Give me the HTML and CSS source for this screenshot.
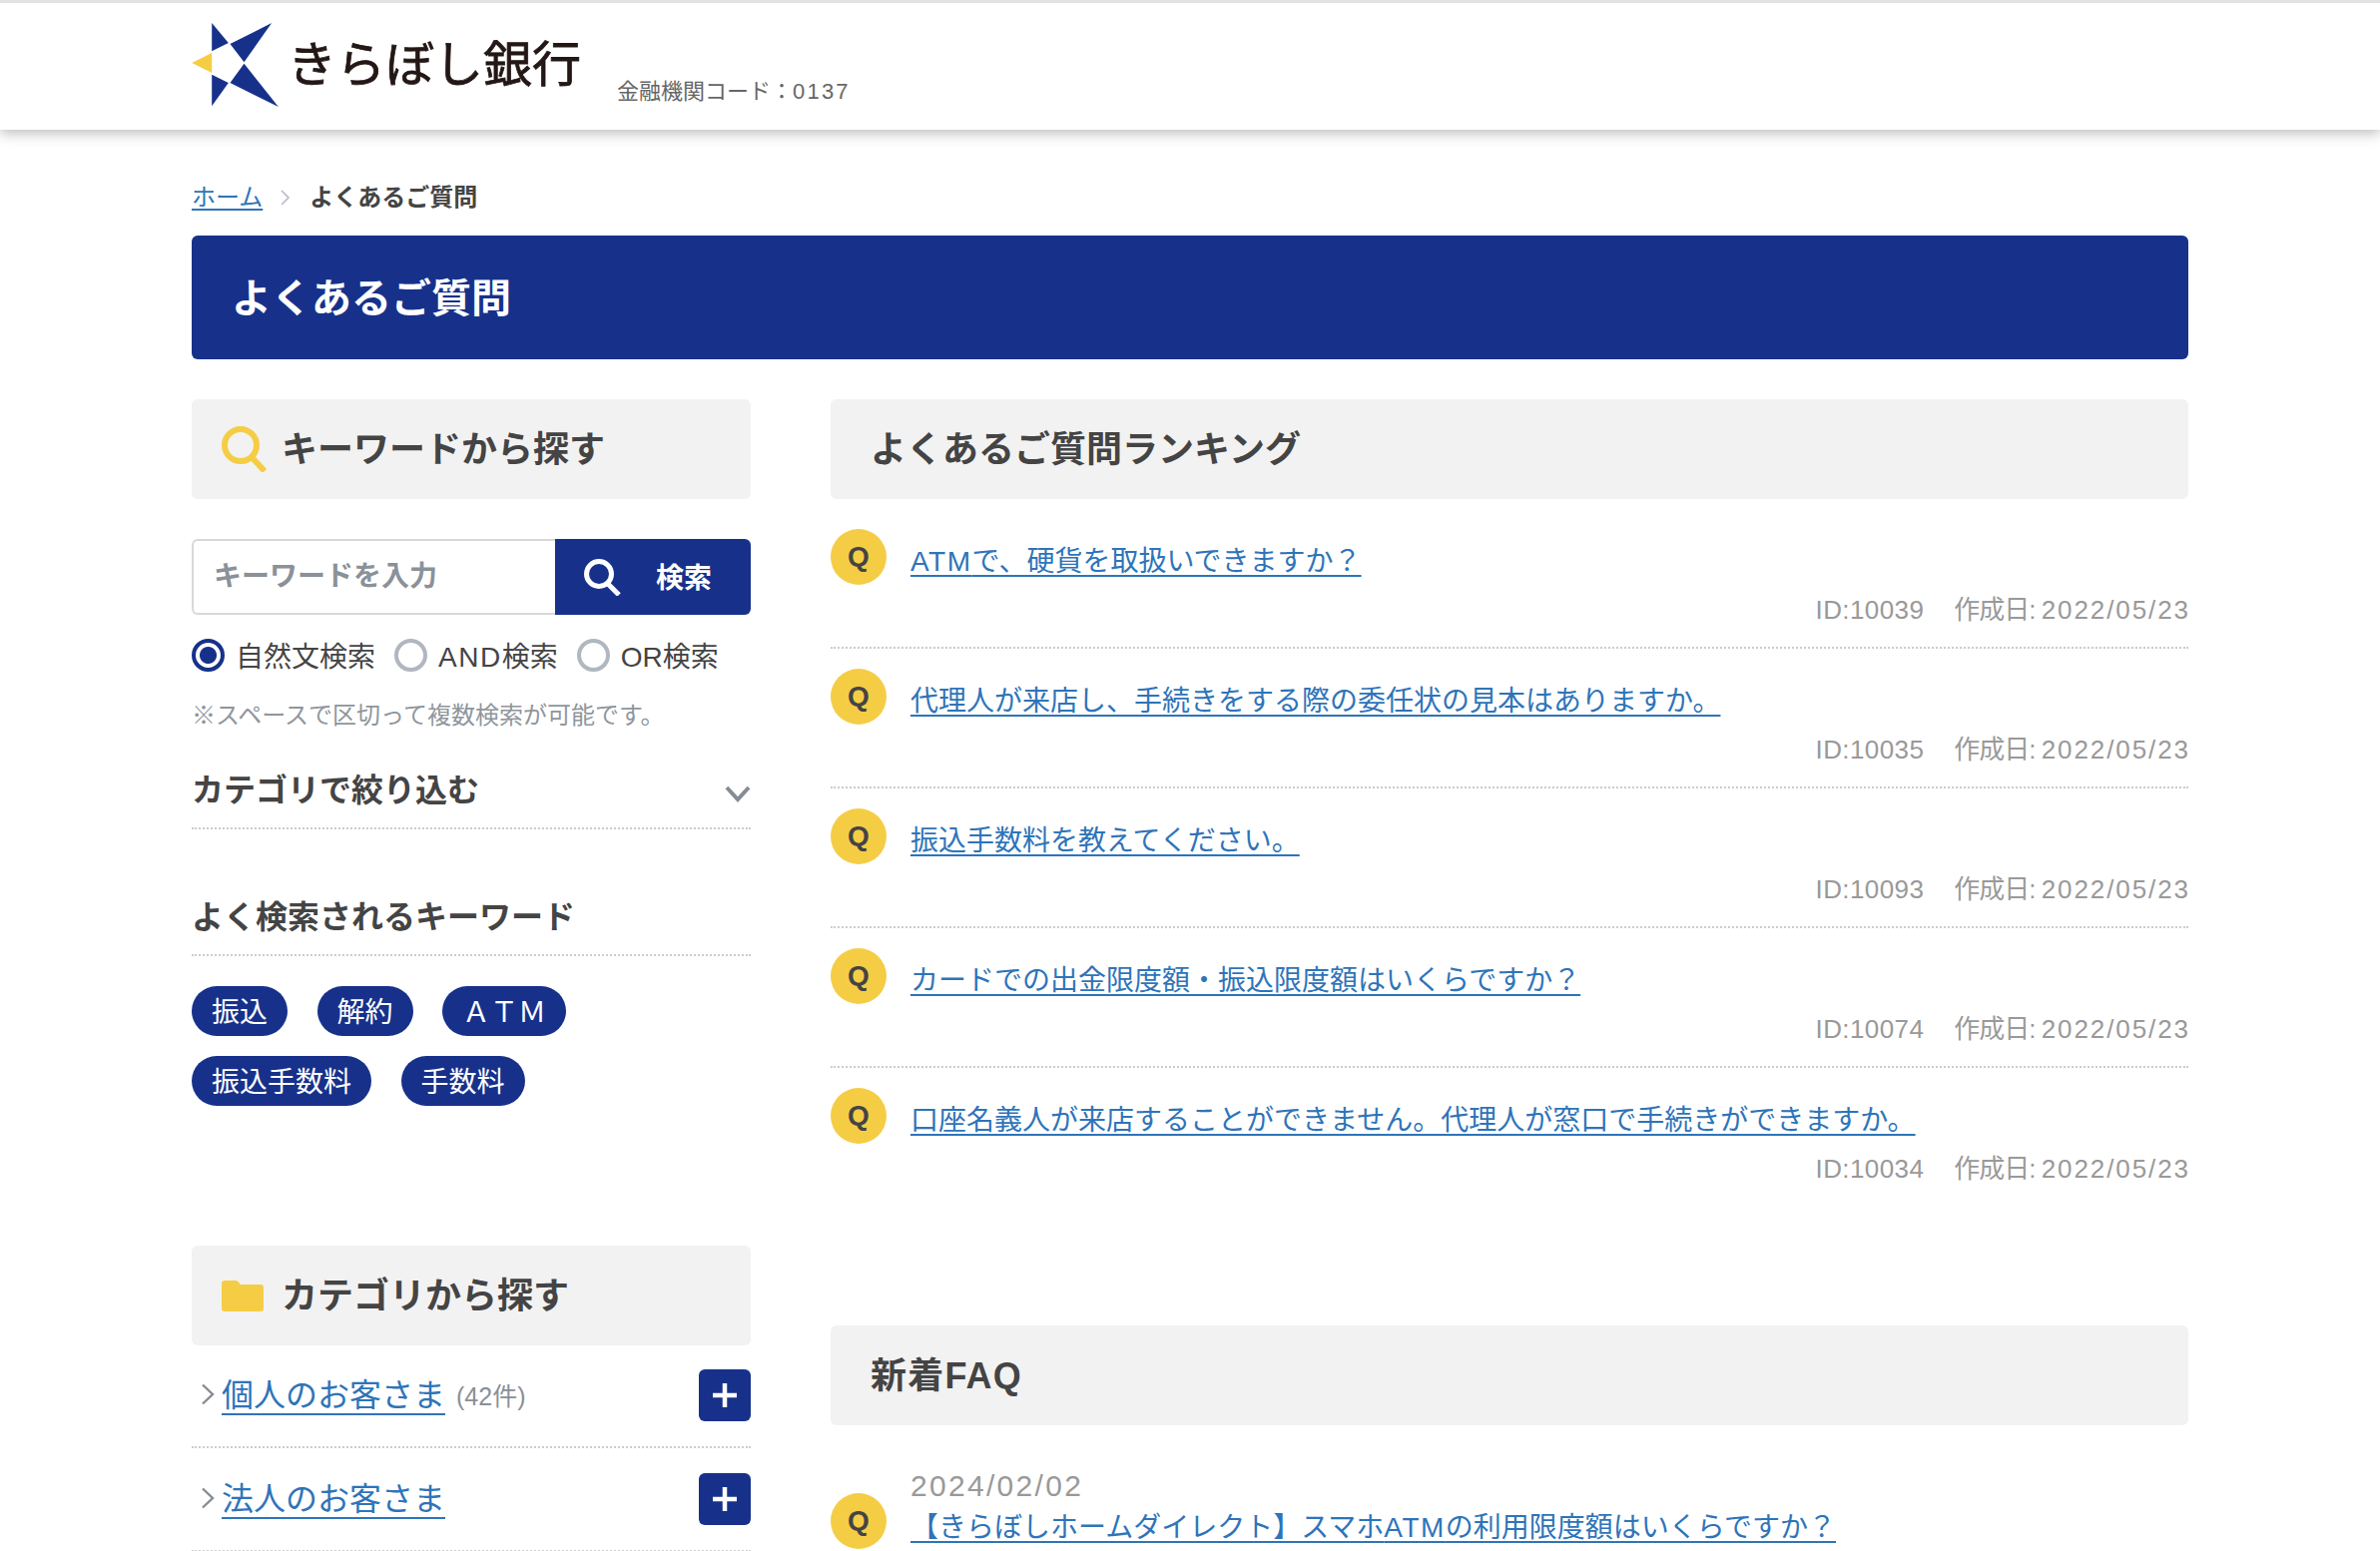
FILE: index.html
```html
<!DOCTYPE html>
<html lang="ja">
<head>
    <meta charset="utf-8">
    <title>よくあるご質問 | きらぼし銀行</title>
    <link rel="stylesheet" href="styles.css">
</head>
<body>
    <header class="site-header">
        <div class="header-inner">
            <a class="logo" href="#">
                <svg class="logo-mark" viewBox="40 40 260 252">
                    <polygon fill="#17318b" points="100,40 150,100 100,125"/>
                    <polygon fill="#17318b" points="280,40 155,103 197,158"/>
                    <polygon fill="#17318b" points="197,162 155,220 300,292"/>
                    <polygon fill="#17318b" points="100,195 150,220 100,290"/>
                    <polygon fill="#f5cd45" points="40,160 100,130 100,190"/>
                </svg>
                <span class="logo-text">きらぼし銀行</span>
            </a>
            <span class="bank-code">金融機関コード：<span class="bank-num">0137</span></span>
        </div>
    </header>

    <main class="container">
        <nav class="breadcrumb">
            <a href="#">ホーム</a>
            <svg class="crumb-sep" viewBox="0 0 10 16"><path d="M1 1l7 7-7 7" fill="none" stroke="#b5bcc4" stroke-width="1.6"/></svg>
            <strong>よくあるご質問</strong>
        </nav>
        <h1 class="page-title">よくあるご質問</h1>

        <div class="columns">
            <div class="side">
                <h2 class="section-head with-icon">
                    <svg class="head-icon" viewBox="0 0 46 46"><circle cx="19" cy="19" r="16" fill="none" stroke="#f5cd45" stroke-width="6"/><path d="M30 31l13 14" stroke="#f5cd45" stroke-width="6" fill="none"/></svg>
                    キーワードから探す
                </h2>

                <form class="search-form">
                    <input class="search-input" type="text" placeholder="キーワードを入力">
                    <button class="search-btn" type="button">
                        <svg class="search-btn-icon" viewBox="0 0 37 37"><circle cx="15" cy="15" r="12.5" fill="none" stroke="#fff" stroke-width="5"/><path d="M24 25l11 11" stroke="#fff" stroke-width="5" fill="none"/></svg>
                        検索
                    </button>
                </form>
                <div class="radio-row">
                    <label class="radio"><input type="radio" name="mode" checked>自然文検索</label>
                    <label class="radio"><input type="radio" name="mode"><span><span class="latin">AND</span>検索</span></label>
                    <label class="radio"><input type="radio" name="mode">OR検索</label>
                </div>
                <p class="search-note">※スペースで区切って複数検索が可能です。</p>

                <div class="sub-head filter-head">
                    カテゴリで絞り込む
                    <svg class="filter-arrow" viewBox="0 0 26 17"><path d="M2 2l11 12L24 2" fill="none" stroke="#858c94" stroke-width="4"/></svg>
                </div>

                <div class="sub-head keyword-head">よく検索されるキーワード</div>
                <div class="keywords">
                    <a class="pill" href="#">振込</a>
                    <a class="pill" href="#">解約</a>
                    <a class="pill" href="#">ＡＴＭ</a>
                    <a class="pill" href="#">振込手数料</a>
                    <a class="pill" href="#">手数料</a>
                </div>

                <h2 class="section-head with-icon category-head">
                    <svg class="head-icon folder" viewBox="0 0 42 31"><path d="M3 0h11c1.500 0 2.500 .7 3.300 2l1.500 2H39c1.800 0 3 1.200 3 3v21c0 1.800-1.200 3-3 3H3c-1.800 0-3-1.200-3-3V3c0-1.800 1.200-3 3-3z" fill="#f5cd45"/></svg>
                    カテゴリから探す
                </h2>
                <ul class="category-list">
                    <li class="category">
                        <svg class="category-arrow" viewBox="0 0 13 22"><path d="M1 1.500l10 9.500-10 9.500" fill="none" stroke="#858c94" stroke-width="2.400"/></svg>
                        <a href="#">個人のお客さま</a>
                        <span class="count">(42件)</span>
                        <button class="plus-btn" type="button"><svg viewBox="0 0 24 24"><path d="M12 0v24M0 12h24" stroke="#fff" stroke-width="4.500"/></svg></button>
                    </li>
                    <li class="category">
                        <svg class="category-arrow" viewBox="0 0 13 22"><path d="M1 1.500l10 9.500-10 9.500" fill="none" stroke="#858c94" stroke-width="2.400"/></svg>
                        <a href="#">法人のお客さま</a>
                        <button class="plus-btn" type="button"><svg viewBox="0 0 24 24"><path d="M12 0v24M0 12h24" stroke="#fff" stroke-width="4.500"/></svg></button>
                    </li>
                </ul>
            </div>

            <div class="content">
                <h2 class="section-head">よくあるご質問ランキング</h2>
                <ul class="faq-list">
                    <li class="faq">
                        <span class="q-mark">Q</span>
                        <div class="faq-body">
                            <a href="#"><span class="latin">ATM</span>で、硬貨を取扱いできますか？</a>
                            <div class="faq-meta"><span class="faq-id">ID:10039</span><span class="faq-date">作成日: <span class="num">2022/05/23</span></span></div>
                        </div>
                    </li>
                    <li class="faq">
                        <span class="q-mark">Q</span>
                        <div class="faq-body">
                            <a href="#">代理人が来店し、手続きをする際の委任状の見本はありますか。</a>
                            <div class="faq-meta"><span class="faq-id">ID:10035</span><span class="faq-date">作成日: <span class="num">2022/05/23</span></span></div>
                        </div>
                    </li>
                    <li class="faq">
                        <span class="q-mark">Q</span>
                        <div class="faq-body">
                            <a href="#">振込手数料を教えてください。</a>
                            <div class="faq-meta"><span class="faq-id">ID:10093</span><span class="faq-date">作成日: <span class="num">2022/05/23</span></span></div>
                        </div>
                    </li>
                    <li class="faq">
                        <span class="q-mark">Q</span>
                        <div class="faq-body">
                            <a href="#">カードでの出金限度額・振込限度額はいくらですか？</a>
                            <div class="faq-meta"><span class="faq-id">ID:10074</span><span class="faq-date">作成日: <span class="num">2022/05/23</span></span></div>
                        </div>
                    </li>
                    <li class="faq">
                        <span class="q-mark">Q</span>
                        <div class="faq-body">
                            <a href="#">口座名義人が来店することができません。代理人が窓口で手続きができますか。</a>
                            <div class="faq-meta"><span class="faq-id">ID:10034</span><span class="faq-date">作成日: <span class="num">2022/05/23</span></span></div>
                        </div>
                    </li>
                </ul>

                <h2 class="section-head new-head">新着FAQ</h2>
                <div class="new-faq">
                    <span class="q-mark">Q</span>
                    <div class="new-faq-body">
                        <div class="new-date">2024/02/02</div>
                        <a href="#">【きらぼしホームダイレクト】スマホ<span class="latin">ATM</span>の利用限度額はいくらですか？</a>
                    </div>
                </div>
            </div>
        </div>
    </main>
</body>
</html>
```

FILE: styles.css
```css
* {
    box-sizing: border-box;
    margin: 0;
    padding: 0;
}

html, body {
    height: 100%;
    overflow: hidden;
}

body {
    font-family: "Liberation Sans", "Noto Sans CJK JP", sans-serif;
    font-size: 28px;
    color: #444;
    background: #fff;
}

a {
    color: #2e74b9;
    text-decoration: underline;
    text-decoration-thickness: 2px;
    text-underline-offset: 4px;
    text-decoration-skip-ink: none;
}

ul {
    list-style: none;
}

svg {
    display: block;
    flex-shrink: 0;
}

.latin {
    letter-spacing: 1.5px;
}

/* header */
.site-header {
    height: 130px;
    border-top: 3px solid #e2e2e2;
    background: #fff;
    box-shadow: 0 4px 12px rgba(0, 0, 0, 0.25);
}

.header-inner {
    width: 2000px;
    margin: 0 auto;
    padding-top: 20px;
    display: flex;
    align-items: flex-end;
}

.logo {
    display: flex;
    align-items: center;
    gap: 9px;
    text-decoration: none;
}

.logo-mark {
    width: 87px;
    height: 84px;
}

.logo-text {
    font-size: 49px;
    line-height: 1;
    color: #231815;
    -webkit-text-stroke: 0.8px #231815;
}

.bank-code {
    margin-left: 36px;
    margin-bottom: -1px;
    font-size: 22px;
    line-height: 32px;
    color: #666;
}

.bank-num {
    letter-spacing: 2.2px;
}

.container {
    width: 2000px;
    margin: 0 auto;
    padding-top: 50px;
}

.breadcrumb {
    display: flex;
    align-items: center;
    font-size: 24px;
    line-height: 36px;
}

.breadcrumb a {
    text-underline-offset: 3px;
}

.crumb-sep {
    width: 10px;
    height: 16px;
    margin: 0 19px 0 18px;
}

.page-title {
    margin-top: 20px;
    height: 124px;
    padding: 0 0 5px 40px;
    display: flex;
    align-items: center;
    font-size: 40px;
    font-weight: 700;
    color: #fff;
    background: #17318b;
    border-radius: 6px;
}

.columns {
    margin-top: 40px;
    display: grid;
    grid-template-columns: 560px 1fr;
    gap: 80px;
}

.section-head {
    height: 100px;
    padding: 0 0 6px 40px;
    display: flex;
    align-items: center;
    font-size: 36px;
    font-weight: 700;
    color: #444;
    background: #f2f2f2;
    border-radius: 6px;
}

.section-head.with-icon {
    padding-left: 30px;
    gap: 14px;
}

.head-icon {
    width: 46px;
    height: 46px;
    margin-top: 6px;
}

.head-icon.folder {
    width: 42px;
    height: 31px;
    margin-right: 4px;
}

/* search */
.search-form {
    margin-top: 40px;
    display: flex;
    height: 76px;
}

.search-input {
    width: 364px;
    padding-left: 20px;
    font-family: inherit;
    font-size: 28px;
    font-weight: 700;
    border: 2px solid #d8d8d8;
    border-right: none;
    border-radius: 6px 0 0 6px;
    outline: none;
}

.search-input::placeholder {
    color: #8a9199;
}

.search-btn {
    width: 196px;
    padding: 0 0 3px 29px;
    display: flex;
    align-items: center;
    gap: 35px;
    font-family: inherit;
    font-size: 28px;
    font-weight: 700;
    color: #fff;
    background: #17318b;
    border: none;
    border-radius: 0 6px 6px 0;
}

.search-btn-icon {
    width: 37px;
    height: 37px;
    margin-top: 3px;
}

.radio-row {
    margin-top: 23px;
    display: flex;
    gap: 19px;
    height: 34px;
}

.radio {
    padding-top: 5px;
    display: flex;
    align-items: center;
    gap: 11px;
    line-height: 34px;
    color: #444;
}

.radio input {
    appearance: none;
    width: 33px;
    height: 33px;
    margin-bottom: 5px;
    border: 4px solid #b0b7bf;
    border-radius: 50%;
    background: #fff;
}

.radio input:checked {
    border-color: #17318b;
    background: radial-gradient(circle, #17318b 0 8px, #fff 9px);
}

.search-note {
    margin-top: 26px;
    font-size: 24px;
    line-height: 36px;
    color: #8f969c;
}

.sub-head {
    padding: 4px 0 15px;
    font-size: 32px;
    font-weight: 700;
    line-height: 44px;
    border-bottom: 2px dotted #ccc;
}

.filter-head {
    margin-top: 31px;
    display: flex;
    justify-content: space-between;
    align-items: center;
}

.filter-arrow {
    width: 26px;
    height: 17px;
    margin-top: 6px;
}

.keyword-head {
    margin-top: 62px;
}

.keywords {
    margin-top: 30px;
    display: flex;
    flex-wrap: wrap;
    gap: 20px 29.5px;
}

.pill {
    height: 50px;
    padding: 0 20px 2px;
    display: flex;
    align-items: center;
    color: #fff;
    text-decoration: none;
    background: #17318b;
    border-radius: 25px;
}

.category-head {
    margin-top: 140px;
}

/* category rows */
.category-list {
    margin-top: -1px;
}

.category {
    height: 104px;
    padding: 0 0 0 10px;
    display: flex;
    align-items: center;
    border-bottom: 2px dotted #ccc;
}

.category a {
    margin-left: 7px;
    padding-bottom: 6px;
    font-size: 32px;
    text-underline-offset: 7px;
}

.category-arrow {
    width: 13px;
    height: 22px;
    margin-bottom: 2px;
}

.count {
    margin-left: 11px;
    padding-bottom: 2px;
    font-size: 25px;
    color: #8a8f95;
}

.plus-btn {
    width: 52px;
    height: 52px;
    margin-left: auto;
    display: flex;
    align-items: center;
    justify-content: center;
    background: #17318b;
    border: none;
    border-radius: 6px;
}

.plus-btn svg {
    width: 24px;
    height: 24px;
}

/* faq */
.faq-list {
    margin-top: 30px;
}

.faq {
    display: flex;
    gap: 24px;
    padding-bottom: 19px;
    margin-bottom: 20px;
    border-bottom: 2px dotted #ccc;
}

.faq:last-child {
    border-bottom: none;
    padding-bottom: 0;
    margin-bottom: 0;
}

.q-mark {
    width: 56px;
    height: 56px;
    flex-shrink: 0;
    padding-bottom: 1px;
    display: flex;
    align-items: center;
    justify-content: center;
    font-size: 28px;
    font-weight: 700;
    color: #444;
    background: #f5cd45;
    border-radius: 50%;
}

.faq-body {
    flex: 1;
    padding-top: 12px;
    line-height: 42px;
}

.faq-meta {
    margin-top: 9px;
    display: flex;
    justify-content: flex-end;
    gap: 30px;
    font-size: 26px;
    line-height: 36px;
    color: #999;
    white-space: nowrap;
}

.faq-id {
    letter-spacing: 0.4px;
}

.faq-date {
    letter-spacing: -1px;
}

.num {
    letter-spacing: 1.9px;
    margin-right: -1.9px;
}

.new-head {
    margin-top: 139px;
    letter-spacing: 1.2px;
}

.new-faq {
    margin-top: 40px;
    display: flex;
    align-items: flex-end;
    gap: 24px;
}

.new-faq-body {
    line-height: 42px;
}

.new-date {
    font-size: 30px;
    letter-spacing: 2.3px;
    color: #999;
}
```
